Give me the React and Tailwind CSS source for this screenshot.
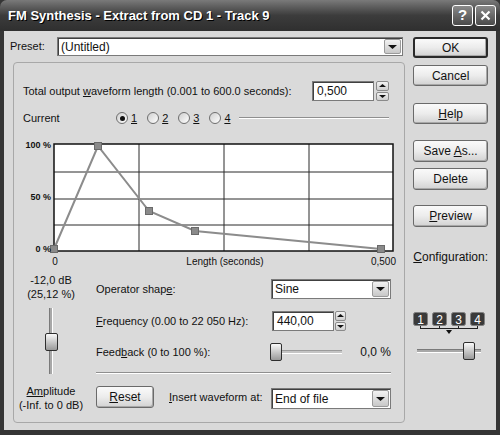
const U = ({ children }) => <span className="underline underline-offset-[1px]">{children}</span>;

function Btn({ children, def = false, className = '' }) {
  return (
    <div
      className={`flex items-center justify-center rounded-[3px] bg-gradient-to-b from-[#fafafa] via-[#ececec] to-[#d2d2d2] shadow-[inset_-1px_-1px_0_#a8a8a8] ${def ? 'border-2 border-[#2a2a2a]' : 'border border-[#6a6a6a]'} ${className}`}
    >
      {children}
    </div>
  );
}

function Arrow({ up = false, size = 4 }) {
  return (
    <svg width={size * 2 + 1} height={size} viewBox={`0 0 ${size * 2 + 1} ${size}`}>
      <path d={up ? `M0 ${size} L${size + 0.5} 0 L${size * 2 + 1} ${size}Z` : `M0 0 L${size * 2 + 1} 0 L${size + 0.5} ${size}Z`} fill="#111" />
    </svg>
  );
}

function Combo({ value, className = '' }) {
  return (
    <div className={`flex items-stretch bg-white border border-[#7a7a7a] shadow-[inset_1px_1px_0_#404040] ${className}`}>
      <div className="flex-1 flex items-center pl-[3px] text-[12px]">{value}</div>
      <div className="w-[17px] m-[1px] flex items-center justify-center bg-gradient-to-b from-[#f2f2f2] to-[#c8c8c8] border border-[#9a9a9a] rounded-[2px]">
        <Arrow />
      </div>
    </div>
  );
}

function Spin({ className = '' }) {
  return (
    <div className={`flex flex-col gap-[1px] ${className}`}>
      <div className="flex-1 flex items-center justify-center bg-gradient-to-b from-[#f2f2f2] to-[#cfcfcf] border border-[#8a8a8a] rounded-[2px]"><Arrow up size={3} /></div>
      <div className="flex-1 flex items-center justify-center bg-gradient-to-b from-[#f2f2f2] to-[#cfcfcf] border border-[#8a8a8a] rounded-[2px]"><Arrow size={3} /></div>
    </div>
  );
}

function Radio({ checked, label }) {
  return (
    <div className="flex items-center gap-[3px]">
      <div className="w-[12px] h-[12px] rounded-full border border-[#6e6e6e] bg-gradient-to-br from-[#cfcfcf] to-white flex items-center justify-center">
        {checked && <div className="w-[5px] h-[5px] rounded-full bg-[#111]" />}
      </div>
      <U>{label}</U>
    </div>
  );
}

function Thumb({ vertical = false }) {
  return (
    <div
      className={`${vertical ? 'w-[13px] h-[18px]' : 'w-[12px] h-[18px]'} rounded-[2px] border border-[#2e2e2e] bg-gradient-to-b from-[#fafafa] to-[#9a9a9a]`}
    />
  );
}

function Chart() {
  const xs = [40, 125, 210, 295, 379];
  const ys = [7, 35, 62, 88, 114];
  const pts = [[40, 112], [84, 9], [135, 74], [181, 94], [367, 112]];
  return (
    <svg width="392" height="132" className="block">
      <rect x="40" y="7" width="339" height="107" fill="#fff" />
      {xs.slice(1, -1).map((x) => <line key={x} x1={x} y1="7" x2={x} y2="114" stroke="#2a2a2a" strokeWidth="1" />)}
      {ys.slice(1, -1).map((y) => <line key={y} x1="40" y1={y} x2="379" y2={y} stroke="#2a2a2a" strokeWidth="1" />)}
      <rect x="40" y="7" width="339" height="107" fill="none" stroke="#111" strokeWidth="1.5" />
      <polyline points={pts.map((p) => p.join(',')).join(' ')} fill="none" stroke="#8c8c8c" strokeWidth="2" />
      {pts.map(([x, y], i) => (
        <rect key={i} x={x - 3.5} y={y - 3.5} width="7" height="7" fill="#8a8a8a" stroke="#6a6a6a" strokeWidth="1" />
      ))}
      <g fontFamily="Liberation Sans, Arial, sans-serif" fontSize="9" fill="#111">
        <text x="37" y="11" textAnchor="end" fontWeight="bold">100 %</text>
        <text x="37" y="63" textAnchor="end" fontWeight="bold">50 %</text>
        <text x="37" y="115" textAnchor="end" fontWeight="bold">0 %</text>
        <text x="41" y="128" textAnchor="middle" fontSize="10">0</text>
        <text x="211" y="128" textAnchor="middle" fontSize="10">Length (seconds)</text>
        <text x="382" y="128" textAnchor="end" fontSize="10">0,500</text>
      </g>
    </svg>
  );
}

function ConfigDiagram() {
  const bx = [0, 19, 38, 57];
  return (
    <svg width="74" height="24" className="block">
      {bx.map((x, i) => (
        <g key={i}>
          <rect x={x + 0.5} y="0.5" width="14" height="13" rx="2" fill="#3a3a3a" stroke="#808080" />
          <text x={x + 7.5} y="11.5" textAnchor="middle" fontSize="12" fill="#fff" fontFamily="Liberation Sans, Arial, sans-serif">{i + 1}</text>
          <line x1={x + 7.5} y1="14" x2={x + 7.5} y2="17" stroke="#222" />
        </g>
      ))}
      <line x1="7.5" y1="16.5" x2="64.5" y2="16.5" stroke="#222" />
      <path d="M33 18 L39 18 L36 22Z" fill="#111" />
    </svg>
  );
}

export default function App() {
  return (
    <div className="w-[500px] h-[435px] flex flex-col bg-[#353535] font-['Liberation_Sans',Arial,sans-serif] text-[11px] text-[#111] select-none overflow-hidden">
      {/* title bar */}
      <div className="h-[31px] flex items-center justify-between pl-[8px] pr-[4px] rounded-t-[7px] bg-gradient-to-b from-[#7a7a7a] via-[#3c3c3c] to-[#2f2f2f]">
        <span className="text-white font-bold text-[13px] [text-shadow:1px_1px_0_#000]">FM Synthesis - Extract from CD 1 - Track 9</span>
        <div className="flex gap-[2px]">
          <div className="w-[21px] h-[21px] rounded-[3px] border border-white bg-gradient-to-b from-[#8a8a8a] to-[#4a4a4a] flex items-center justify-center text-white font-bold text-[15px]">?</div>
          <div className="w-[21px] h-[21px] rounded-[3px] border border-white bg-gradient-to-b from-[#8a8a8a] to-[#4a4a4a] flex items-center justify-center">
            <svg width="11" height="11"><path d="M1.5 1.5 L9.5 9.5 M9.5 1.5 L1.5 9.5" stroke="#fff" strokeWidth="2.2" /></svg>
          </div>
        </div>
      </div>

      {/* body */}
      <div className="flex-1 mx-[4px] mb-[5px] bg-[#d9d9d9] flex">
        {/* left column */}
        <div className="w-[404px] flex flex-col pt-[6px]">
          <div className="flex items-center pl-[6px] h-[19px]">
            <span className="w-[47px]">Preset:</span>
            <Combo value="(Untitled)" className="w-[346px] h-[19px]" />
          </div>

          <div className="mt-[6px] ml-[9px] w-[392px] h-[361px] rounded-[4px] border border-[#a8a8a8] bg-[#dadada] flex flex-col">
            {/* waveform length */}
            <div className="flex items-center mt-[18px] pl-[9px] pr-[15px] h-[20px]">
              <span className="whitespace-nowrap">Total output <U>w</U>aveform length (0.001 to 600.0 seconds):</span>
              <div className="ml-auto flex items-stretch h-[20px]">
                <div className="w-[62px] bg-white border border-[#7a7a7a] shadow-[inset_1px_1px_0_#404040] flex items-center pl-[4px] text-[12px]">0,500</div>
                <Spin className="w-[13px] ml-[2px]" />
              </div>
            </div>

            {/* current */}
            <div className="flex items-center mt-[10px] pl-[9px] pr-[15px] h-[14px]">
              <span className="w-[93px]">Current</span>
              <div className="flex gap-[10px]">
                <Radio checked label="1" />
                <Radio label="2" />
                <Radio label="3" />
                <Radio label="4" />
              </div>
              <div className="flex-1 ml-[8px] h-[2px] border-t border-[#8f8f8f] border-b border-b-white" />
            </div>

            <div className="mt-[12px]">
              <Chart />
            </div>

            {/* lower */}
            <div className="flex mt-[4px]">
              <div className="w-[74px] flex flex-col items-center leading-[14px]">
                <span>-12,0 dB</span>
                <span>(25,12 %)</span>
                <div className="relative mt-[7px] h-[66px] w-[13px] flex justify-center">
                  <div className="w-[4px] h-full bg-[#a8a8a8] border-l border-[#7a7a7a] border-r border-r-white" />
                  <div className="absolute top-[25px] left-0">
                    <Thumb vertical />
                  </div>
                </div>
                <span className="mt-[10px]"><U>Am</U>plitude</span>
                <span>(-Inf. to 0 dB)</span>
              </div>

              <div className="ml-[8px] w-[295px] flex flex-col">
                <div className="flex items-center h-[20px] mt-[6px]">
                  <span className="w-[175px]">Operator shap<U>e</U>:</span>
                  <Combo value="Sine" className="w-[120px] h-[20px]" />
                </div>
                <div className="flex items-center h-[20px] mt-[12px]">
                  <span className="w-[176px]"><U>F</U>requency (0.00 to 22 050 Hz):</span>
                  <div className="w-[62px] h-[20px] bg-white border border-[#7a7a7a] shadow-[inset_1px_1px_0_#404040] flex items-center pl-[4px] text-[12px]">440,00</div>
                  <Spin className="w-[11px] h-[20px] ml-[1px]" />
                </div>
                <div className="flex items-center h-[18px] mt-[12px]">
                  <span className="w-[174px]">Feed<U>b</U>ack (0 to 100 %):</span>
                  <div className="relative w-[72px] h-[18px] flex items-center">
                    <div className="w-full h-[4px] bg-[#c4c4c4] border-t border-[#9a9a9a] border-b border-b-white" />
                    <div className="absolute left-0 top-0"><Thumb /></div>
                  </div>
                  <span className="ml-auto text-[12px]">0,0 %</span>
                </div>
                <div className="mt-[11px] h-[2px] border-t border-[#8f8f8f] border-b border-b-white" />
                <div className="flex items-center mt-[12px] h-[22px]">
                  <Btn className="w-[58px] h-[22px] text-[12px]"><span><U>R</U>eset</span></Btn>
                  <span className="ml-[15px] w-[102px] whitespace-nowrap"><U>I</U>nsert waveform at:</span>
                  <Combo value="End of file" className="w-[120px] h-[21px] mt-[3px]" />
                </div>
              </div>
            </div>
          </div>
        </div>

        {/* right column */}
        <div className="flex-1 flex flex-col pl-[6px] pr-[8px] pt-[6px] text-[12px]">
          <Btn def className="h-[21px]">OK</Btn>
          <Btn className="h-[21px] mt-[7px]">Cancel</Btn>
          <Btn className="h-[21px] mt-[17px]"><span><U>H</U>elp</span></Btn>
          <Btn className="h-[22px] mt-[16px]"><span>Save <U>A</U>s...</span></Btn>
          <Btn className="h-[22px] mt-[6px]">Delete</Btn>
          <Btn className="h-[22px] mt-[15px]"><span><U>P</U>review</span></Btn>
          <span className="mt-[21px]"><U>C</U>onfiguration:</span>
          <div className="mt-[46px]">
            <ConfigDiagram />
          </div>
          <div className="relative mt-[6px] ml-[4px] w-[64px] h-[18px] flex items-center">
            <div className="w-full h-[4px] bg-[#a8a8a8] border-t border-[#7a7a7a] border-b border-b-white" />
            <div className="absolute left-[46px] top-0"><Thumb /></div>
          </div>
        </div>
      </div>
    </div>
  );
}
